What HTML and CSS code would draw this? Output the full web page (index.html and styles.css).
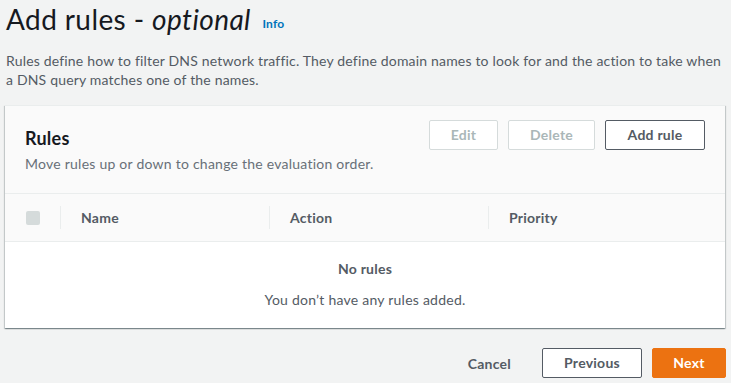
FILE: index.html
```html
<!DOCTYPE html>
<html lang="en">
<head>
<meta charset="utf-8">
<title>Add rules</title>
<link rel="stylesheet" href="styles.css">
</head>
<body>
<div class="page">
  <div class="page-header">
    <h1 class="title">Add rules - <em>optional</em> <a class="info" href="#">Info</a></h1>
    <p class="desc">Rules define how to filter DNS network traffic. They define domain names to look for and the action to take when a DNS query matches one of the names.</p>
  </div>

  <div class="card">
    <div class="card-header">
      <div class="card-heading">
        <h2 class="card-title">Rules</h2>
        <p class="card-desc">Move rules up or down to change the evaluation order.</p>
      </div>
      <div class="actions">
        <button class="btn btn-disabled btn-edit">Edit</button>
        <button class="btn btn-disabled btn-delete">Delete</button>
        <button class="btn btn-normal btn-add">Add rule</button>
      </div>
    </div>
    <div class="table-head">
      <div class="th th-check"><span class="checkbox"></span></div>
      <div class="th th-name"><span class="divider"></span>Name</div>
      <div class="th th-action"><span class="divider"></span>Action</div>
      <div class="th th-priority"><span class="divider"></span>Priority</div>
    </div>
    <div class="empty">
      <p class="empty-title">No rules</p>
      <p class="empty-text">You don’t have any rules added.</p>
    </div>
  </div>

  <div class="footer">
    <button class="btn-link">Cancel</button>
    <button class="btn btn-normal btn-prev">Previous</button>
    <button class="btn btn-primary btn-next">Next</button>
  </div>
</div>
</body>
</html>
```

FILE: styles.css
```css
* { box-sizing: border-box; }

html, body {
  margin: 0;
  padding: 0;
  background: #f2f3f3;
}

body {
  font-family: "Lato", "Open Sans", sans-serif;
  color: #16191f;
  font-size: 14px;
  letter-spacing: 0.24px;
}

.page {
  padding: 0 5px 0 5px;
}

.page-header {
  padding: 0 0 0 1px;
}

.title {
  margin: 0;
  font-size: 28px;
  font-weight: 400;
  line-height: 38px;
  letter-spacing: 0.4px;
  color: #16191f;
}

.title em {
  font-style: italic;
}

.info {
  font-size: 12px;
  font-weight: 700;
  letter-spacing: 0.2px;
  color: #0073bb;
  text-decoration: none;
  margin-left: 4px;
  vertical-align: 2px;
}

.desc {
  margin: 8px 0 0 0;
  font-size: 14px;
  line-height: 19px;
  letter-spacing: 0.18px;
  color: #545b64;
}

.card {
  margin-top: 16px;
  background: #ffffff;
  border-top: 1px solid #eaeded;
  box-shadow: 0 1px 1px 0 rgba(0, 28, 36, 0.3), 1px 1px 1px 0 rgba(0, 28, 36, 0.15), -1px 1px 1px 0 rgba(0, 28, 36, 0.15);
  margin-right: 1px;
}

.card-header {
  display: flex;
  justify-content: space-between;
  align-items: flex-start;
  background: #fafafa;
  padding: 14px 20px 0 20px;
  height: 87px;
}

.card-title {
  margin: 0;
  padding-top: 7px;
  font-size: 18px;
  font-weight: 700;
  line-height: 22px;
  color: #16191f;
}

.card-desc {
  margin: 5px 0 0 0;
  font-size: 14px;
  line-height: 20px;
  color: #687078;
}

.actions {
  display: flex;
  gap: 10px;
}

.btn {
  height: 30px;
  padding: 0 10px;
  border-radius: 2px;
  font-family: inherit;
  font-size: 14px;
  font-weight: 700;
  letter-spacing: 0.24px;
  line-height: 28px;
  background: #ffffff;
  cursor: pointer;
}

.btn-disabled {
  border: 1px solid #d5dbdb;
  color: #aab7b8;
}

.btn-edit { width: 69px; }
.btn-delete { width: 87px; }
.btn-add { width: 100px; }

.btn-normal {
  border: 1px solid #545b64;
  color: #545b64;
}

.btn-primary {
  border: 1px solid #ec7211;
  background: #ec7211;
  color: #ffffff;
}

.table-head {
  display: grid;
  grid-template-columns: 55px 209px 219px 1fr;
  height: 49px;
  background: #fafafa;
  border-top: 1px solid #eaeded;
  border-bottom: 1px solid #eaeded;
}

.th {
  position: relative;
  display: flex;
  align-items: center;
  padding-left: 21px;
  font-weight: 700;
  color: #545b64;
}

.checkbox {
  display: block;
  width: 14px;
  height: 14px;
  border-radius: 2px;
  background: #d5dbdb;
}

.divider {
  position: absolute;
  left: 0;
  top: 12px;
  bottom: 12px;
  width: 1px;
  background: #eaeded;
}

.empty {
  height: 86px;
  padding-top: 17px;
  text-align: center;
  color: #545b64;
}

.empty-title {
  margin: 0;
  font-weight: 700;
  line-height: 20px;
}

.empty-text {
  margin: 11px 0 0 0;
  line-height: 20px;
}

.footer {
  display: flex;
  justify-content: flex-end;
  align-items: center;
  gap: 10px;
  margin-top: 20px;
}

.btn-link {
  border: none;
  background: transparent;
  font-family: inherit;
  font-size: 14px;
  font-weight: 700;
  letter-spacing: 0.24px;
  color: #545b64;
  padding: 0 20px;
  height: 30px;
  margin-right: 1px;
}

.btn-prev { width: 100px; }
.btn-next { width: 74px; }
```
